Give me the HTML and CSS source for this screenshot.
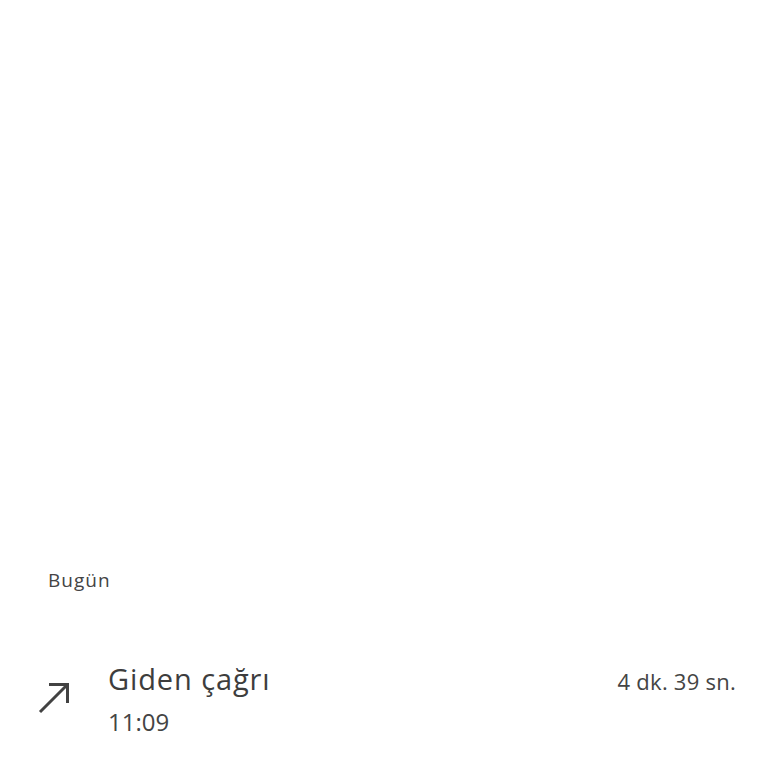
FILE: index.html
```html
<!DOCTYPE html>
<html lang="tr">
<head>
<meta charset="utf-8">
<link rel="stylesheet" href="styles.css">
</head>
<body>
<main class="screen">
  <section class="history">
    <h2 class="day">Bugün</h2>
    <div class="call">
      <svg class="call-icon" viewBox="0 0 36 36" width="36" height="36" aria-hidden="true">
        <path d="M13 4.5H31.5V23 M31.5 4.5L4 32" fill="none" stroke="#424242" stroke-width="3"/>
      </svg>
      <div class="call-info">
        <div class="call-type">Giden çağrı</div>
        <div class="call-time">11:09</div>
      </div>
      <div class="call-duration">4 dk. 39 sn.</div>
    </div>
  </section>
</main>
</body>
</html>
```
FILE: styles.css
```css
* { box-sizing: border-box; }
html, body { margin: 0; padding: 0; background: #fff; }
body {
  font-family: "Open Sans", Roboto, "Liberation Sans", sans-serif;
  color: #444;
}
.screen {
  height: 768px;
  display: flex;
  flex-direction: column;
  justify-content: flex-end;
}
.history {
  padding: 0 32px 31px 48px;
}
.day {
  margin: 0 0 69px 0;
  font-size: 19px;
  font-weight: 400;
  line-height: 24px;
  letter-spacing: 1px;
  color: #444;
}
.call {
  display: flex;
  align-items: flex-start;
}
.call-icon {
  margin: 19px 36px 0 -12px;
  flex: none;
}
.call-info {
  flex: 1;
  display: flex;
  flex-direction: column;
}
.call-type {
  font-size: 29px;
  line-height: 36px;
  letter-spacing: 0.9px;
  color: #3d3d3d;
}
.call-time {
  font-size: 24px;
  line-height: 30px;
  color: #444;
  margin-top: 10px;
}
.call-duration {
  font-size: 22px;
  line-height: 36px;
  letter-spacing: 0.25px;
  color: #444;
  margin-top: 2px;
}
```
